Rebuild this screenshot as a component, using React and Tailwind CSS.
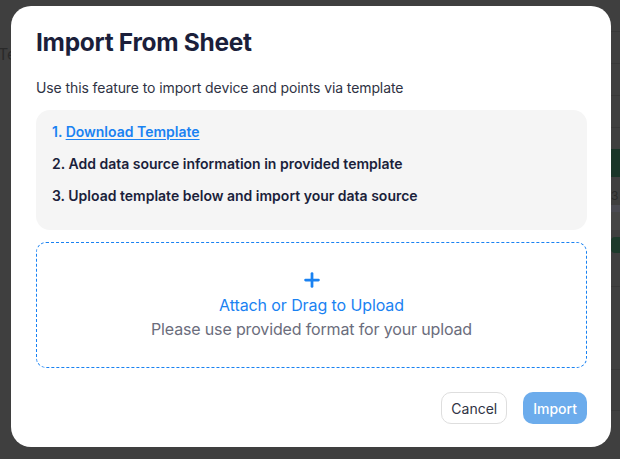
import { Plus } from "lucide-react";

const font = { fontFamily: "Inter, 'Noto Sans', sans-serif" };

function Backdrop() {
  return (
    <div className="flex h-[459px] w-[620px] bg-[#3f3f3f]">
      <div className="w-[11px] pt-[44px] text-[16px] leading-5 text-[#2a2a2a] overflow-hidden whitespace-nowrap">
        <span className="-ml-[2px]">Te</span>
      </div>
      <div className="flex-1" />
      <div className="flex w-[9px] flex-col">
        <div className="h-[32px] border-b border-[#383838]" />
        <div className="h-[32px] border-b border-[#383838]" />
        <div className="h-[32px] border-b border-[#383838]" />
        <div className="h-[32px] border-b border-[#383838]" />
        <div className="h-[21px]" />
        <div className="h-[28px] bg-[#193528]" />
        <div className="h-[12px]" />
        <div className="h-[14px] text-[12px] leading-[14px] text-[#2a2a2a]">3</div>
        <div className="mt-[2px] h-[7px] bg-[#4a4a52]" />
        <div className="h-[18px] bg-[#464646]" />
        <div className="mt-[7px] h-[16px] rounded-l bg-[#1d3a2b]" />
        <div className="h-[34px] border-b border-[#383838]" />
        <div className="h-[83px] border-b border-[#383838]" />
        <div className="h-[41px] border-b border-[#383838]" />
      </div>
    </div>
  );
}

export default function App() {
  return (
    <div className="relative h-[459px] w-[620px] overflow-hidden" style={font}>
      <Backdrop />
      <div className="absolute left-[11px] top-[6px] flex h-[441px] w-[600px] flex-col rounded-[20px] bg-white pl-[25px] pr-[24px] pt-[20px]">
        <h2 className="text-[24.5px] font-bold leading-8 tracking-[-0.3px] text-[#1b1f3b]">
          Import From Sheet
        </h2>
        <p className="mt-[20px] text-[14px] leading-5 tracking-[-0.1px] text-[#2f3344]">
          Use this feature to import device and points via template
        </p>
        <div className="mt-[12px] rounded-[14px] bg-[#f5f5f5] px-[16px] pt-[12px] pb-[12px]">
          <div className="mb-[12px] text-[14px] font-semibold leading-5 text-[#1a82f2]">
            1. <a className="underline underline-offset-2">Download Template</a>
          </div>
          <div className="mb-[12px] text-[14px] font-semibold leading-5 text-[#1b1f3b]">
            2. Add data source information in provided template
          </div>
          <div className="mb-[12px] text-[14px] font-semibold leading-5 text-[#1b1f3b]">
            3. Upload template below and import your data source
          </div>
        </div>
        <div className="mt-[12px] flex h-[126px] flex-col items-center justify-center rounded-[10px] border border-dashed border-[#1a82f2]">
          <Plus size={22} strokeWidth={3} className="text-[#1a82f2]" />
          <div className="mt-[2px] text-[16px] leading-6 tracking-[-0.1px] text-[#1a82f2]">
            Attach or Drag to Upload
          </div>
          <div className="text-[16px] leading-6 tracking-[-0.15px] text-[#6b6d7c]">
            Please use provided format for your upload
          </div>
        </div>
        <div className="mt-[24px] flex justify-end gap-4">
          <button className="h-[32px] rounded-[10px] border border-[#dedede] px-[9px] text-[14px] text-[#2f3344]">
            Cancel
          </button>
          <button className="h-[32px] rounded-[10px] bg-[#6cacec] px-[10px] text-[14px] font-medium text-white">
            Import
          </button>
        </div>
      </div>
    </div>
  );
}
